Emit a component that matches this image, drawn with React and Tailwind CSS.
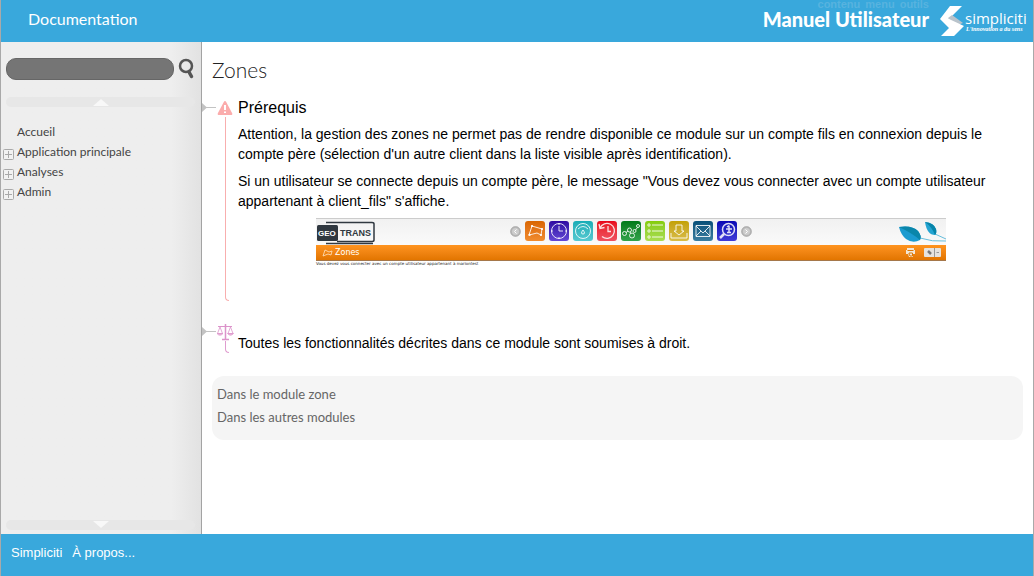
const LATO = "font-['Lato','Open_Sans',sans-serif]";

function Logo() {
  return (
    <svg width="87" height="32" viewBox="0 0 87 32" role="img" aria-label="Simpliciti">
      <path d="M10 1H22L12 11L20 17L0 14Z" fill="#fff" />
      <path d="M8 13L12 10L23 18L15 21Z" fill="#b9c3cb" />
      <path d="M0 14L9 14L24 21L14 31H1L9 23Z" fill="#fff" />
      <text x="25" y="19" fill="#fff" fontSize="15" fontFamily="Open Sans, sans-serif">simpliciti</text>
      <text x="26" y="26" fill="#fff" fontSize="6" fontStyle="italic" fontWeight="bold" fontFamily="Liberation Serif, serif">L'innovation a du sens</text>
    </svg>
  );
}

function ScrollBar({ label, up }) {
  return (
    <button type="button" aria-label={label} className="flex h-[10px] w-full shrink-0 items-center justify-center rounded-full bg-[#e7e7e7]">
      <svg width="16" height="8" viewBox="0 0 16 8">
        <path d={up ? "M0 8L8 1L16 8Z" : "M0 0H16L8 7Z"} fill="#f8f8f8" />
      </svg>
    </button>
  );
}

function PlusBox() {
  return (
    <svg width="11" height="11" viewBox="0 0 11 11" fill="none" stroke="#a9a9a9">
      <rect x="0.5" y="0.5" width="10" height="10" rx="1" fill="#f2f2f2" />
      <path d="M2 5.5H9M5.5 2V9" />
    </svg>
  );
}

const menu = [
  { label: "Accueil", expandable: false },
  { label: "Application principale", expandable: true },
  { label: "Analyses", expandable: true },
  { label: "Admin", expandable: true },
];

function Section({ icon, line, children, className }) {
  return (
    <section className={`flex ${className}`}>
      <div className="flex w-9 shrink-0 flex-col">
        <svg width="36" height="17" viewBox="0 0 36 17" className="shrink-0">
          <path d="M0 3L5 7.5L0 12Z" fill="#c3c3c3" />
          <path d="M4 7.5H14" stroke="#c3c3c3" />
          {icon}
        </svg>
        <div className={`ml-[23px] w-1 flex-1 rounded-bl border-b border-l ${line}`} />
      </div>
      <div className="min-w-0 flex-1">{children}</div>
    </section>
  );
}

const warning = (
  <g>
    <path d="M23 1Q23.700 1 24.200 2L30.300 13.500Q30.500 15 29.500 15H16.500Q15.500 15 15.700 13.500L21.800 2Q22.300 1 23 1Z" fill="#fbacac" />
    <path d="M23 5V10M23 11.500V13" stroke="#fff" strokeWidth="2" />
  </g>
);

const scales = (
  <g stroke="#dc93ca" fill="none">
    <path d="M16 2.500H30" />
    <path d="M23.500 0V15M20 15.500H27" strokeWidth="1.500" />
    <path d="M18 3L15.500 9.500H20.500ZM28.500 3L26 9.500H31Z" strokeWidth="0.800" />
    <path d="M15 9.500Q18 13 21 9.500ZM25.500 9.500Q28.500 13 31.500 9.500Z" fill="#e9b9dc" strokeWidth="0.700" />
  </g>
);

const tiles = [
  { name: "Zones", bg: "from-[#d96600] to-[#f18b2d]", d: <><path d="M4 14L7 5L17 8L16 14L12 12Z" /><path d="M3.500 14H5.500M6 5H8M16 8H18M15 14H17" strokeWidth="2" /></> },
  { name: "Horaires", bg: "from-[#3006a2] to-[#6547d5]", d: <><circle cx="10" cy="10" r="7.500" /><path d="M10 5V10H14M10 2V4M10 16V18M2 10H4M16 10H18" /></> },
  { name: "Consommation", bg: "from-[#16acb6] to-[#55cad2]", d: <><circle cx="10" cy="10" r="7.500" /><path d="M5 8Q10 3 15 8M10 9Q7 13 10 13Q13 13 10 9" /></> },
  { name: "Historique", bg: "from-[#e80018] to-[#f05060]", d: <path d="M3 7A7.500 7.500 0 1 1 5 15.500M2 3L3 7.500L7.500 6.500M11 5V10.500H14" strokeWidth="1.300" /> },
  { name: "Analyses", bg: "from-[#007a19] to-[#31a34b]", d: <><circle cx="3.500" cy="12.500" r="2" /><circle cx="8.500" cy="9" r="2" /><circle cx="11" cy="14.500" r="2.500" /><circle cx="13.500" cy="10" r="1.500" /><circle cx="17" cy="5" r="1.500" /><path d="M5 11.500L7 10M9 11L10 12.500M14.500 9L16.500 6.500" /></> },
  { name: "Listes", bg: "from-[#85cc05] to-[#aadd50]", d: <><circle cx="4" cy="4" r="1.200" /><circle cx="4" cy="10" r="1.200" /><circle cx="4" cy="16" r="1.200" /><path d="M7 4H18M7 10H18M7 16H18" /></> },
  { name: "Export", bg: "from-[#c3a100] to-[#d9bd45]", d: <path d="M2 12V17H18V12M7 4H13V10H15L10 14L5 10H7Z" /> },
  { name: "Messages", bg: "from-[#064f78] to-[#3b7fa1]", d: <path d="M3 4.500H17V15.500H3ZM3 5L10 12L17 5M3 15L8 10M17 15L12 10" /> },
  { name: "Recherche", bg: "from-[#0804b4] to-[#403ad8]", d: <><circle cx="11.500" cy="8.500" r="6" strokeWidth="1.500" /><path d="M7 13L3 17" strokeWidth="2.500" /><path d="M12 4.500V12M9 8H15M10 11.500H14M10 6L12 4.500" strokeWidth="1.500" /></> },
];

function Knob({ d }) {
  return (
    <svg width="11" height="11" viewBox="0 0 11 11">
      <circle cx="5.500" cy="5.500" r="5" fill="#b5b5b5" stroke="#999" strokeWidth="0.500" />
      <circle cx="5.500" cy="5.500" r="3.500" fill="#cdcdcd" />
      <path d={d} stroke="#fff" fill="none" />
    </svg>
  );
}

function GeoTransLogo() {
  return (
    <svg width="60" height="24" viewBox="0 0 60 24" role="img" aria-label="GeoTrans">
      <path d="M10 1.500H56Q58 1.500 58 3V19Q58 20.500 56 20.500H21M10 22.500H57" fill="none" stroke="#303840" strokeWidth="1.500" />
      <rect x="1" y="4" width="21" height="16" rx="1.500" fill="#303840" />
      <g fontFamily="Liberation Sans Narrow, Liberation Sans, sans-serif" fontWeight="bold" fontSize="9">
        <text x="2" y="15" fill="#fff" fontSize="8">GEO</text>
        <text x="24" y="15" fill="#303840">TRANS</text>
      </g>
    </svg>
  );
}

function AppPreview() {
  return (
    <figure className="mx-auto w-[630px] max-w-full font-['DejaVu_Sans',sans-serif]">
      <div className="flex h-[27px] items-start justify-between border-t border-[#ccc] bg-linear-to-b from-[#f1f1f1] to-[#fafafa] pt-0.5 pr-1.5">
        <div className="flex flex-1"><GeoTransLogo /></div>
        <div className="flex items-center gap-1">
          <Knob d="M6.500 3.500L4.500 5.500L6.500 7.500" />
          {tiles.map((t) => (
            <svg key={t.name} width="20" height="20" viewBox="0 0 20 20" fill="none" stroke="#fff" strokeOpacity="0.850" role="img" aria-label={t.name} className={`rounded-[3px] bg-linear-to-b ${t.bg}`}>
              {t.d}
            </svg>
          ))}
          <Knob d="M4.500 3.500L6.500 5.500L4.500 7.500" />
        </div>
        <div className="-mr-1.5 flex flex-1 justify-end">
          <svg width="48" height="24" viewBox="0 0 48 24">
            <path d="M22 17Q34 21 48 20M37 13L48 18" stroke="#68bedb" fill="none" />
            <path d="M1 6Q14 4 20 10Q24 15 22 19Q15 23 8 18Q3 14 1 6Z" fill="#1b9bd0" />
            <path d="M1 6Q14 4 20 10Q24 15 22 19Q14 12 1 6Z" fill="#0a86aa" />
            <path d="M27 1Q36 2 38 8Q39 12 37 14Q29 14 27 1Z" fill="#24a4d2" />
            <path d="M27 1Q36 2 38 8Q39 12 37 14Q34 6 27 1Z" fill="#0784a9" />
          </svg>
        </div>
      </div>
      <div className="flex h-4 items-center border-b border-[#a5774a] bg-linear-to-b from-[#ff941f] to-[#e27500] pr-[5px] pl-1.5 text-[8px] text-white">
        <svg width="11" height="8" viewBox="0 0 11 8" fill="none" stroke="#ffe5c4" strokeWidth="0.800">
          <path d="M1 7L3 1L7 3L10 2L9 6L6 5Z" />
        </svg>
        <span className="ml-0.5 flex-1">Zones</span>
        <svg width="11" height="11" viewBox="0 0 11 11" fill="#f3e7d6">
          <path d="M2 1H9V3H10V7H8V10H4L3 7H1V3H2Z" />
          <path d="M2.500 3.500H8.500M4 6H7.500V9H5L4 7Z" stroke="#d97809" fill="none" />
        </svg>
        <svg width="17" height="9" viewBox="0 0 17 9" className="ml-2">
          <rect width="17" height="9" rx="1" fill="#e6e3df" />
          <path d="M4 3L7 6" stroke="#777" strokeWidth="2.500" />
          <path d="M10.500 0V9M12.500 4.500H15" stroke="#999" />
        </svg>
      </div>
      <figcaption className="text-[4px] leading-[5px] whitespace-nowrap text-[#222]">
        Vous devez vous connecter avec un compte utilisateur appartenant à mariontest
      </figcaption>
    </figure>
  );
}

export default function App() {
  return (
    <div className="flex min-h-screen flex-col border-x border-[#a9a9a9] bg-white font-['Liberation_Sans',sans-serif] text-black">
      <header className={`relative flex h-[42px] shrink-0 items-center bg-[#39a8dc] pr-1.5 pl-[27px] text-white ${LATO}`}>
        <nav className="absolute top-0 right-[104px] flex gap-[5px] font-['Liberation_Sans',sans-serif] text-[11px] leading-[8px] font-bold text-[#57b3df]">
          <a href="#contenu">contenu</a>
          <a href="#menu">menu</a>
          <a href="#outils">outils</a>
        </nav>
        <a href="#documentation" className="flex-1 pb-1 text-base">Documentation</a>
        <strong className="relative mr-[11px] pb-1 text-[20px] leading-5 font-black">Manuel Utilisateur</strong>
        <Logo />
      </header>

      <div className="flex flex-1">
        <aside id="menu" className={`flex w-[201px] shrink-0 flex-col border-r border-[#a3a3a3] bg-linear-to-r from-[#eee] from-85% to-[#e2e2e2] pr-[6px] pb-1 pl-[5px] ${LATO}`}>
          <form className="mt-4 flex items-center gap-1" onSubmit={(e) => e.preventDefault()}>
            <input type="search" aria-label="Rechercher" className="h-[22px] w-[168px] rounded-[10px] border border-[#666] bg-[#757575] px-2 text-sm text-white outline-none" />
            <button type="submit" aria-label="Lancer la recherche">
              <svg width="17" height="22" viewBox="0 0 17 22" fill="none" stroke="#555" strokeLinecap="round">
                <circle cx="8" cy="8" r="6" strokeWidth="2.500" />
                <path d="M11 14L13.500 18.500" strokeWidth="3.500" />
              </svg>
            </button>
          </form>
          <div className="mt-[17px] flex"><ScrollBar up label="Défiler vers le haut" /></div>
          <ul className="mt-[15px] -ml-[3px] flex-1 text-xs leading-5 text-[#444]">
            {menu.map((m) => (
              <li key={m.label} className="flex items-center gap-[3px]">
                <span className="w-[11px] pt-1">{m.expandable && <PlusBox />}</span>
                <a href="#contenu">{m.label}</a>
              </li>
            ))}
          </ul>
          <ScrollBar label="Défiler vers le bas" />
        </aside>

        <main id="contenu" className="min-w-0 flex-1 pt-4">
          <h1 className={`pl-2.5 text-[21px] leading-6 font-light text-[#222] ${LATO}`}>Zones</h1>
          <Section icon={warning} line="border-[#f8aeae]" className="mt-[18px] h-[201px]">
            <h2 className="-mt-[3px] text-base leading-[21px]">Prérequis</h2>
            <div className="pr-2.5 text-sm leading-5">
              <p className="mt-1.5">Attention, la gestion des zones ne permet pas de rendre disponible ce module sur un compte fils en connexion depuis le compte père (sélection d'un autre client dans la liste visible après identification).</p>
              <p className="mt-[7px]">Si un utilisateur se connecte depuis un compte père, le message "Vous devez vous connecter avec un compte utilisateur appartenant à client_fils" s'affiche.</p>
            </div>
            <div className="mt-[7px] pr-[9px]"><AppPreview /></div>
          </Section>
          <Section icon={scales} line="border-[#df9ccf]" className="mt-[23px] h-[29px]">
            <p className="mt-[9px] text-sm leading-5">Toutes les fonctionnalités décrites dans ce module sont soumises à droit.</p>
          </Section>
          <ul className={`mt-[23px] mr-2.5 ml-2.5 rounded-xl bg-[#f5f5f5] px-[5px] pt-[7px] pb-[11px] text-[13px] leading-[23px] text-[#666] ${LATO}`}>
            <li><a href="#module-zone">Dans le module zone</a></li>
            <li><a href="#autres-modules">Dans les autres modules</a></li>
          </ul>
        </main>
      </div>

      <footer id="outils" className="flex h-[42px] shrink-0 gap-2.5 bg-[#39a8dc] px-2.5 pt-[9px] text-[13px] leading-5 text-white">
        <a href="#simpliciti">Simpliciti</a>
        <a href="#apropos">À propos...</a>
      </footer>
    </div>
  );
}
